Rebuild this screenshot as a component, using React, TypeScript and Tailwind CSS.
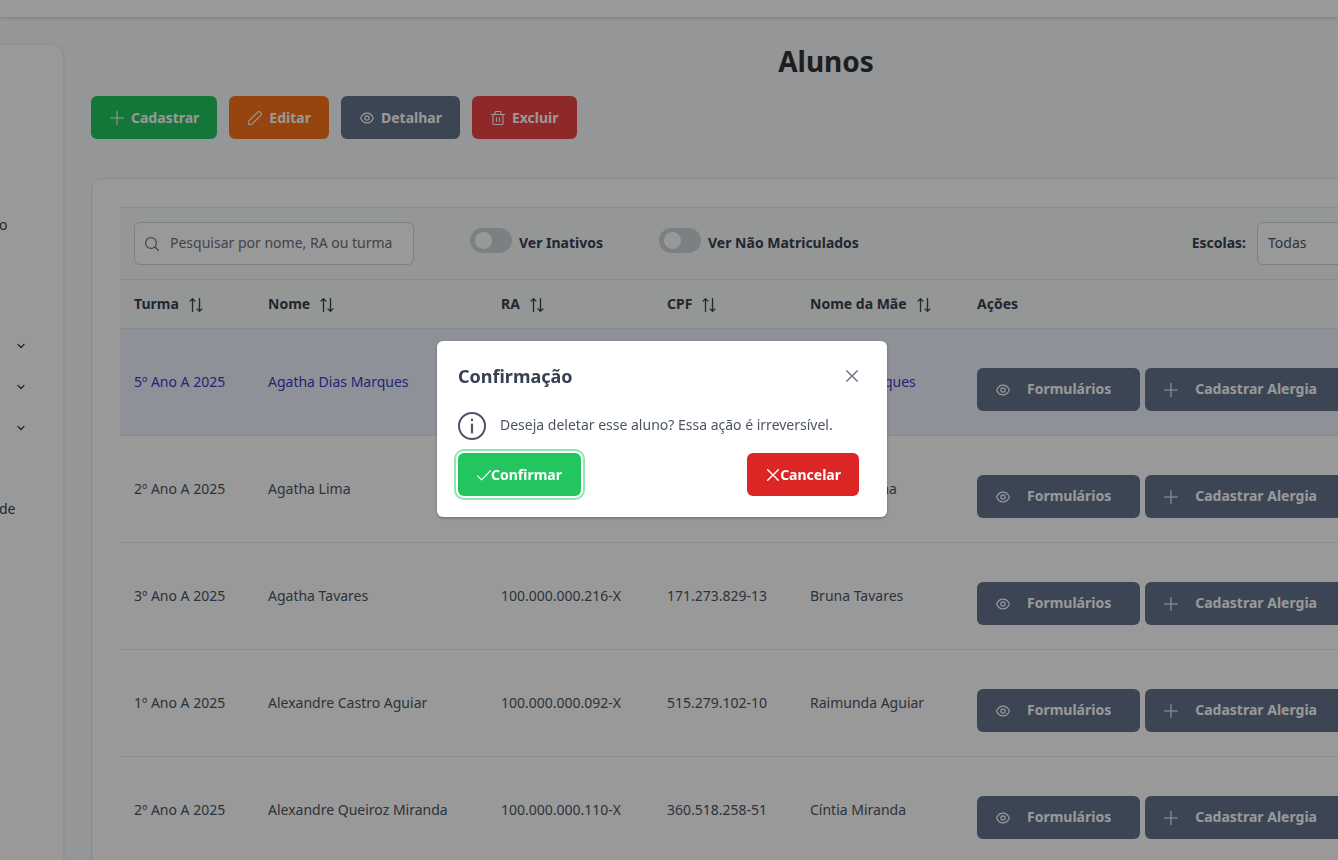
import type { ReactNode } from "react";

type IconProps = { className?: string };

const stroke = {
  fill: "none",
  stroke: "currentColor",
  strokeLinecap: "round" as const,
  strokeLinejoin: "round" as const,
  "aria-hidden": true,
};

const Plus = () => (
  <svg viewBox="0 0 14 14" className="size-3.5 shrink-0" {...stroke} strokeWidth="1.1">
    <path d="M7 .5v13M.5 7h13" />
  </svg>
);

const Pencil = () => (
  <svg viewBox="0 0 14 14" className="size-3.5 shrink-0" {...stroke} strokeWidth="1.1">
    <path d="M.6 13.4l.3-3.5L9.7 1.2c.8-.8 1.8-.8 2.6 0l.5.5c.8.8.8 1.8 0 2.6L4 13.1z" />
  </svg>
);

const Eye = () => (
  <svg viewBox="0 0 14 14" className="size-3.5 shrink-0" {...stroke} strokeWidth="1.2">
    <path d="M.6 7C2 3.8 4.300 2.100 7 2.100S12 3.800 13.400 7C12 10.200 9.700 11.900 7 11.900S2 10.200.6 7z" />
    <circle cx="7" cy="7" r="2.100" />
  </svg>
);

const Trash = () => (
  <svg viewBox="0 0 14 14" className="size-3.5 shrink-0" {...stroke} strokeWidth="1.1">
    <path d="M.5 3.500h13M2 3.500v8.800c0 .7.500 1.200 1.200 1.200h7.600c.7 0 1.200-.5 1.200-1.200V3.500M4 3.300V1.600C4 1 4.500.5 5.100.5h3.800C9.500.5 10 1 10 1.600v1.700M5.500 6.500v4M8.500 6.500v4" />
  </svg>
);

const Search = () => (
  <svg viewBox="0 0 14 14" className="size-3.5 shrink-0" {...stroke} strokeWidth="1.2">
    <circle cx="6" cy="6" r="5.400" />
    <path d="M10 10l3.500 3.500" />
  </svg>
);

const Sort = () => (
  <svg viewBox="0 0 14 14" className="mt-0.5 size-3.5 shrink-0" {...stroke} strokeWidth="1.300">
    <path d="M3.500 13.400V.7M1 3.100L3.500.7 6 3.100M10.500.6v12.700M8 10.900l2.500 2.400 2.500-2.400" />
  </svg>
);

const Chevron = () => (
  <svg viewBox="0 0 8 8" className="size-2" {...stroke} strokeWidth="1.300">
    <path d="M1 2.500l3 3 3-3" />
  </svg>
);

const Check = () => (
  <svg viewBox="0 0 14 14" className="size-3.5 shrink-0" {...stroke} strokeWidth="1.1">
    <path d="M.5 7.800l4.100 4L13.500 2.600" />
  </svg>
);

const Times = ({ className = "" }: IconProps) => (
  <svg viewBox="0 0 14 14" className={`size-3.5 shrink-0 ${className}`} {...stroke} strokeWidth="1.4">
    <path d="M1.700 1.700l10.600 10.600M12.300 1.700L1.700 12.300" />
  </svg>
);

const Info = () => (
  <svg viewBox="0 0 28 28" className="size-7 shrink-0" {...stroke}>
    <circle cx="14" cy="14" r="13" strokeWidth="2" />
    <path d="M14 12.500v8" strokeWidth="2.200" />
    <path d="M14 7.800v.1" strokeWidth="2.400" />
  </svg>
);

const buttonBase = "flex h-[43px] cursor-pointer items-center rounded-md font-bold text-white whitespace-nowrap";

function ToolButton({ color, icon, children }: { color: string; icon: ReactNode; children: ReactNode }) {
  return (
    <button type="button" className={`${buttonBase} gap-[7px] pr-[18px] pl-[19px] ${color}`}>
      {icon}
      {children}
    </button>
  );
}

function RowButton({ icon, children }: { icon: ReactNode; children: ReactNode }) {
  return (
    <button type="button" className={`${buttonBase} shrink-0 gap-[17px] bg-[#64748b] pr-[29px] pl-[19px]`}>
      <span className="pt-0.5">{icon}</span>
      <span className="pb-0.5">{children}</span>
    </button>
  );
}

function Toggle({ id, children }: { id: string; children: ReactNode }) {
  return (
    <div className="flex items-center gap-[7px] pb-0.5">
      <input
        id={id}
        type="checkbox"
        role="switch"
        className="mb-1 flex h-[25px] w-[42px] appearance-none items-center rounded-full bg-[#d1d5db] px-[5px] before:size-[17px] before:rounded-full before:bg-white checked:justify-end checked:bg-[#22c55e]"
      />
      <label htmlFor={id} className="font-bold text-[#374151]">
        {children}
      </label>
    </div>
  );
}

const columns = [
  { label: "Turma", width: "w-[134px]", sortable: true },
  { label: "Nome", width: "w-[233px]", sortable: true },
  { label: "RA", width: "w-[166px]", sortable: true },
  { label: "CPF", width: "w-[143px]", sortable: true },
  { label: "Nome da Mãe", width: "w-[167px]", sortable: true },
  { label: "Ações", width: "w-auto", sortable: false },
];

const students = [
  ["5º Ano A 2025", "Agatha Dias Marques", "", "", "Márcia Marques"],
  ["2º Ano A 2025", "Agatha Lima", "", "", "Adriana Lima"],
  ["3º Ano A 2025", "Agatha Tavares", "100.000.000.216-X", "171.273.829-13", "Bruna Tavares"],
  ["1º Ano A 2025", "Alexandre Castro Aguiar", "100.000.000.092-X", "515.279.102-10", "Raimunda Aguiar"],
  ["2º Ano A 2025", "Alexandre Queiroz Miranda", "100.000.000.110-X", "360.518.258-51", "Cíntia Miranda"],
];

function Sidebar() {
  return (
    <aside className="mt-7 w-[63px] shrink-0 overflow-hidden rounded-tr-xl bg-white pt-[169px] text-[#374151] shadow-[0_0_4px_rgba(0,0,0,0.1)]">
      <nav className="-ml-px flex flex-col">
        <a href="#" className="flex h-[41px] items-start">o</a>
        <div className="mt-[70px] flex flex-col pl-[18px]">
          {["Cadastros", "Turmas", "Relatórios"].map((name) => (
            <button key={name} type="button" aria-label={name} className="flex h-[41px] items-center">
              <Chevron />
            </button>
          ))}
        </div>
        <a href="#" className="mt-[50px]">de</a>
      </nav>
    </aside>
  );
}

function StudentsTable() {
  return (
    <table className="w-full table-fixed border-separate border-spacing-0 text-left">
      <thead>
        <tr className="h-[49px] bg-[#f9fafb] text-[#374151]">
          {columns.map((c) => (
            <th key={c.label} className={`${c.width} border-b border-[#e5e7eb] px-3.5 font-bold`}>
              <span className="flex items-center gap-2.5">
                <span className="pb-0.5">{c.label}</span>
                {c.sortable && <Sort />}
              </span>
            </th>
          ))}
        </tr>
      </thead>
      <tbody>
        {students.map((row, i) => (
          <tr key={row[1]} className={`h-[107px] ${i === 0 ? "bg-[#eef2ff] text-[#4338ca]" : "bg-white text-[#4b5563]"}`}>
            {row.map((cell, j) => (
              <td key={columns[j].label} className="border-b border-[#e5e7eb] px-3.5 pb-0.5 whitespace-nowrap">
                {cell}
              </td>
            ))}
            <td className="border-b border-[#e5e7eb] px-3.5">
              <div className="flex gap-[5px] pt-3.5">
                <RowButton icon={<Eye />}>Formulários</RowButton>
                <RowButton icon={<Plus />}>Cadastrar Alergia</RowButton>
              </div>
            </td>
          </tr>
        ))}
      </tbody>
    </table>
  );
}

function ConfirmDialog() {
  return (
    <div className="fixed inset-0 flex items-center justify-center bg-black/40 pr-3.5 pb-0.5">
      <div
        role="dialog"
        aria-modal="true"
        aria-labelledby="dialog-title"
        className="w-[450px] rounded-md bg-white px-[21px] pb-[21px] text-[#4b5563] shadow-[0_1px_3px_rgba(0,0,0,0.3)]"
      >
        <div className="flex h-[70px] items-center justify-between">
          <h2 id="dialog-title" className="text-lg font-bold text-[#374151]">Confirmação</h2>
          <button type="button" aria-label="Fechar" className="flex size-7 cursor-pointer items-center justify-center text-[#6b7280]">
            <Times />
          </button>
        </div>
        <div className="flex items-center gap-3.5 pt-px">
          <Info />
          <p className="pb-[3px]">Deseja deletar esse aluno? Essa ação é irreversível.</p>
        </div>
        <div className="mt-[13px] flex justify-between pr-[7px]">
          <button type="button" className={`${buttonBase} bg-[#22c55e] px-[19px] ring-2 ring-[#8ce8ac] ring-offset-2`}>
            <Check />
            Confirmar
          </button>
          <button type="button" className={`${buttonBase} bg-[#dc2626] pr-[18px] pl-[19px]`}>
            <Times />
            Cancelar
          </button>
        </div>
      </div>
    </div>
  );
}

export default function App() {
  return (
    <div className="h-screen overflow-hidden bg-[#f8fafc] font-['Noto_Sans',sans-serif] text-[14px] leading-[21px]">
      <header className="relative h-[17px] bg-white shadow-[0_1px_3px_rgba(0,0,0,0.15)]" />
      <div className="flex min-h-screen">
        <Sidebar />
        <main className="ml-7 min-w-[1470px] flex-1 pt-[23px]">
          <h1 className="text-center text-[28px] leading-[42px] font-bold text-[#333333]">Alunos</h1>
          <div className="mt-3.5 flex gap-3">
            <ToolButton color="bg-[#22c55e]" icon={<Plus />}>Cadastrar</ToolButton>
            <ToolButton color="bg-[#f97316]" icon={<Pencil />}>Editar</ToolButton>
            <ToolButton color="bg-[#64748b]" icon={<Eye />}>Detalhar</ToolButton>
            <ToolButton color="bg-[#ef4444]" icon={<Trash />}>Excluir</ToolButton>
          </div>
          <section className="mt-[39px] rounded-xl border border-[#dfe7ef] bg-white p-7">
            <div className="flex items-center justify-between border-y border-[#e5e7eb] bg-[#f9fafb] p-3.5">
              <div className="flex items-center gap-14">
                <div className="flex h-[43px] w-[280px] items-center gap-[11px] rounded-md border border-[#d1d5db] bg-white pl-2.5 text-[#6b7280]">
                  <Search />
                  <input
                    type="text"
                    aria-label="Pesquisar"
                    placeholder="Pesquisar por nome, RA ou turma"
                    className="min-w-0 flex-1 pb-0.5 outline-none placeholder:text-[#6b7280]"
                  />
                </div>
                <Toggle id="inativos">Ver Inativos</Toggle>
                <Toggle id="nao-matriculados">Ver Não Matriculados</Toggle>
              </div>
              <div className="flex items-center gap-[11px]">
                <label htmlFor="escolas" className="pb-0.5 font-bold text-[#374151]">Escolas:</label>
                <select
                  id="escolas"
                  className="h-[43px] w-[261px] appearance-none rounded-md border border-[#d1d5db] bg-white px-2.5 pb-0.5 text-[#4b5563]"
                >
                  <option>Todas</option>
                </select>
              </div>
            </div>
            <StudentsTable />
          </section>
        </main>
      </div>
      <ConfirmDialog />
    </div>
  );
}
